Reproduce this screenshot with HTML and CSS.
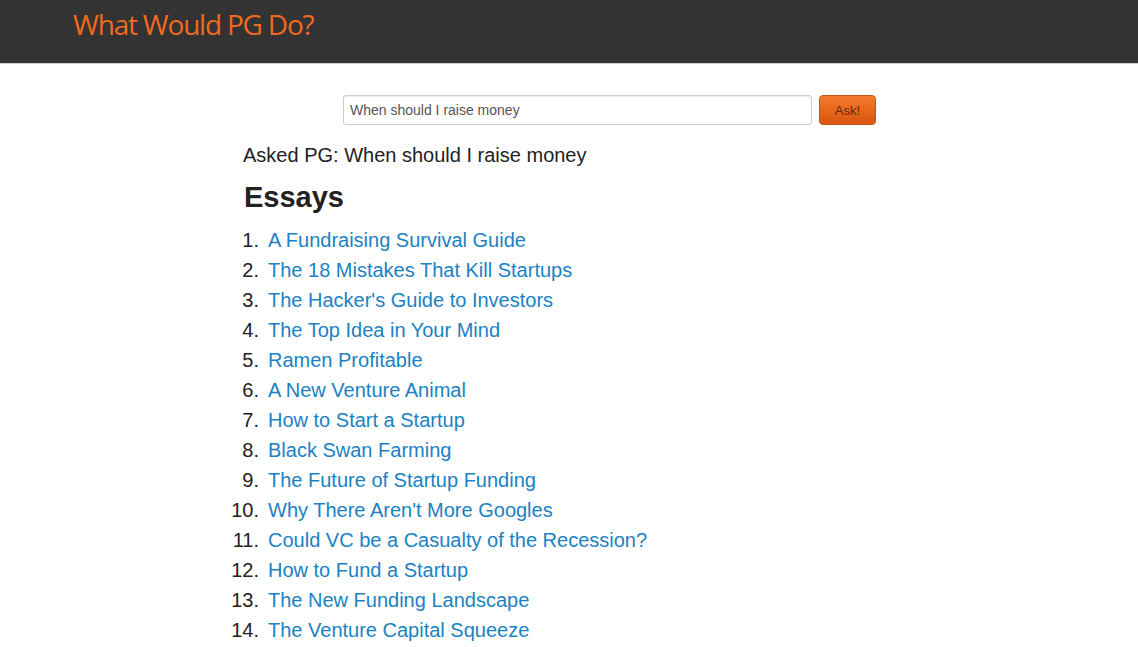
FILE: index.html
```html
<!DOCTYPE html>
<html>
<head>
<meta charset="utf-8">
<link rel="stylesheet" href="styles.css">
</head>
<body>
<header class="topbar">
  <div class="brand">What Would PG Do?</div>
</header>
<main class="content">
  <form class="ask">
    <input class="ask-input" type="text" value="When should I raise money">
    <button class="ask-btn" type="button">Ask!</button>
  </form>
  <p class="asked">Asked PG: When should I raise money</p>
  <h2 class="essays">Essays</h2>
  <ol class="list">
    <li><a href="#">A Fundraising Survival Guide</a></li>
    <li><a href="#">The 18 Mistakes That Kill Startups</a></li>
    <li><a href="#">The Hacker's Guide to Investors</a></li>
    <li><a href="#">The Top Idea in Your Mind</a></li>
    <li><a href="#">Ramen Profitable</a></li>
    <li><a href="#">A New Venture Animal</a></li>
    <li><a href="#">How to Start a Startup</a></li>
    <li><a href="#">Black Swan Farming</a></li>
    <li><a href="#">The Future of Startup Funding</a></li>
    <li><a href="#">Why There Aren't More Googles</a></li>
    <li><a href="#">Could VC be a Casualty of the Recession?</a></li>
    <li><a href="#">How to Fund a Startup</a></li>
    <li><a href="#">The New Funding Landscape</a></li>
    <li><a href="#">The Venture Capital Squeeze</a></li>
  </ol>
</main>
</body>
</html>
```

FILE: styles.css
```css
html, body {
  margin: 0;
  padding: 0;
  background: #fff;
  font-family: "Liberation Sans", Arial, sans-serif;
  color: #333;
}
.topbar {
  height: 64px;
  background: #333333;
  border-bottom: 1px solid #d0d0d0;
  box-sizing: border-box;
}
.brand {
  padding-left: 73px;
  padding-top: 5px;
  font-family: "Open Sans", "Noto Sans", sans-serif;
  font-size: 28px;
  letter-spacing: -1.2px;
  color: #f06a1e;
  line-height: 38px;
}
.content {
  padding-left: 243px;
  padding-top: 31px;
}
.ask {
  display: flex;
  margin: 0 0 0 100px;
  gap: 7px;
}
.ask-input {
  width: 469px;
  height: 30px;
  box-sizing: border-box;
  border: 1px solid #cccccc;
  border-radius: 3px;
  padding: 0 6px;
  font-family: "Liberation Sans", Arial, sans-serif;
  font-size: 14px;
  color: #555;
  box-shadow: inset 0 1px 1px rgba(0,0,0,0.075);
}
.ask-btn {
  width: 57px;
  height: 30px;
  border: 1px solid #c65414;
  border-radius: 4px;
  background: linear-gradient(#f37a2c, #d9560f);
  color: #6b2a06;
  font-family: "Liberation Sans", Arial, sans-serif;
  font-size: 13px;
  padding: 0;
}
.asked {
  margin: 18px 0 0 0;
  font-size: 20px;
  line-height: 24px;
  color: #222;
}
.essays {
  margin: 12px 0 0 1px;
  font-size: 29px;
  line-height: 36px;
  font-weight: bold;
  color: #222;
}
.list {
  margin: 10px 0 0 -43px;
  padding: 0;
  list-style: none;
  counter-reset: item;
  font-size: 20px;
  line-height: 30px;
  color: #222;
}
.list li {
  display: flex;
  counter-increment: item;
}
.list li::before {
  content: counter(item) ".";
  width: 59px;
  text-align: right;
  padding-right: 9px;
  flex: none;
}
.list a {
  color: #1a82c4;
  text-decoration: none;
}
```
